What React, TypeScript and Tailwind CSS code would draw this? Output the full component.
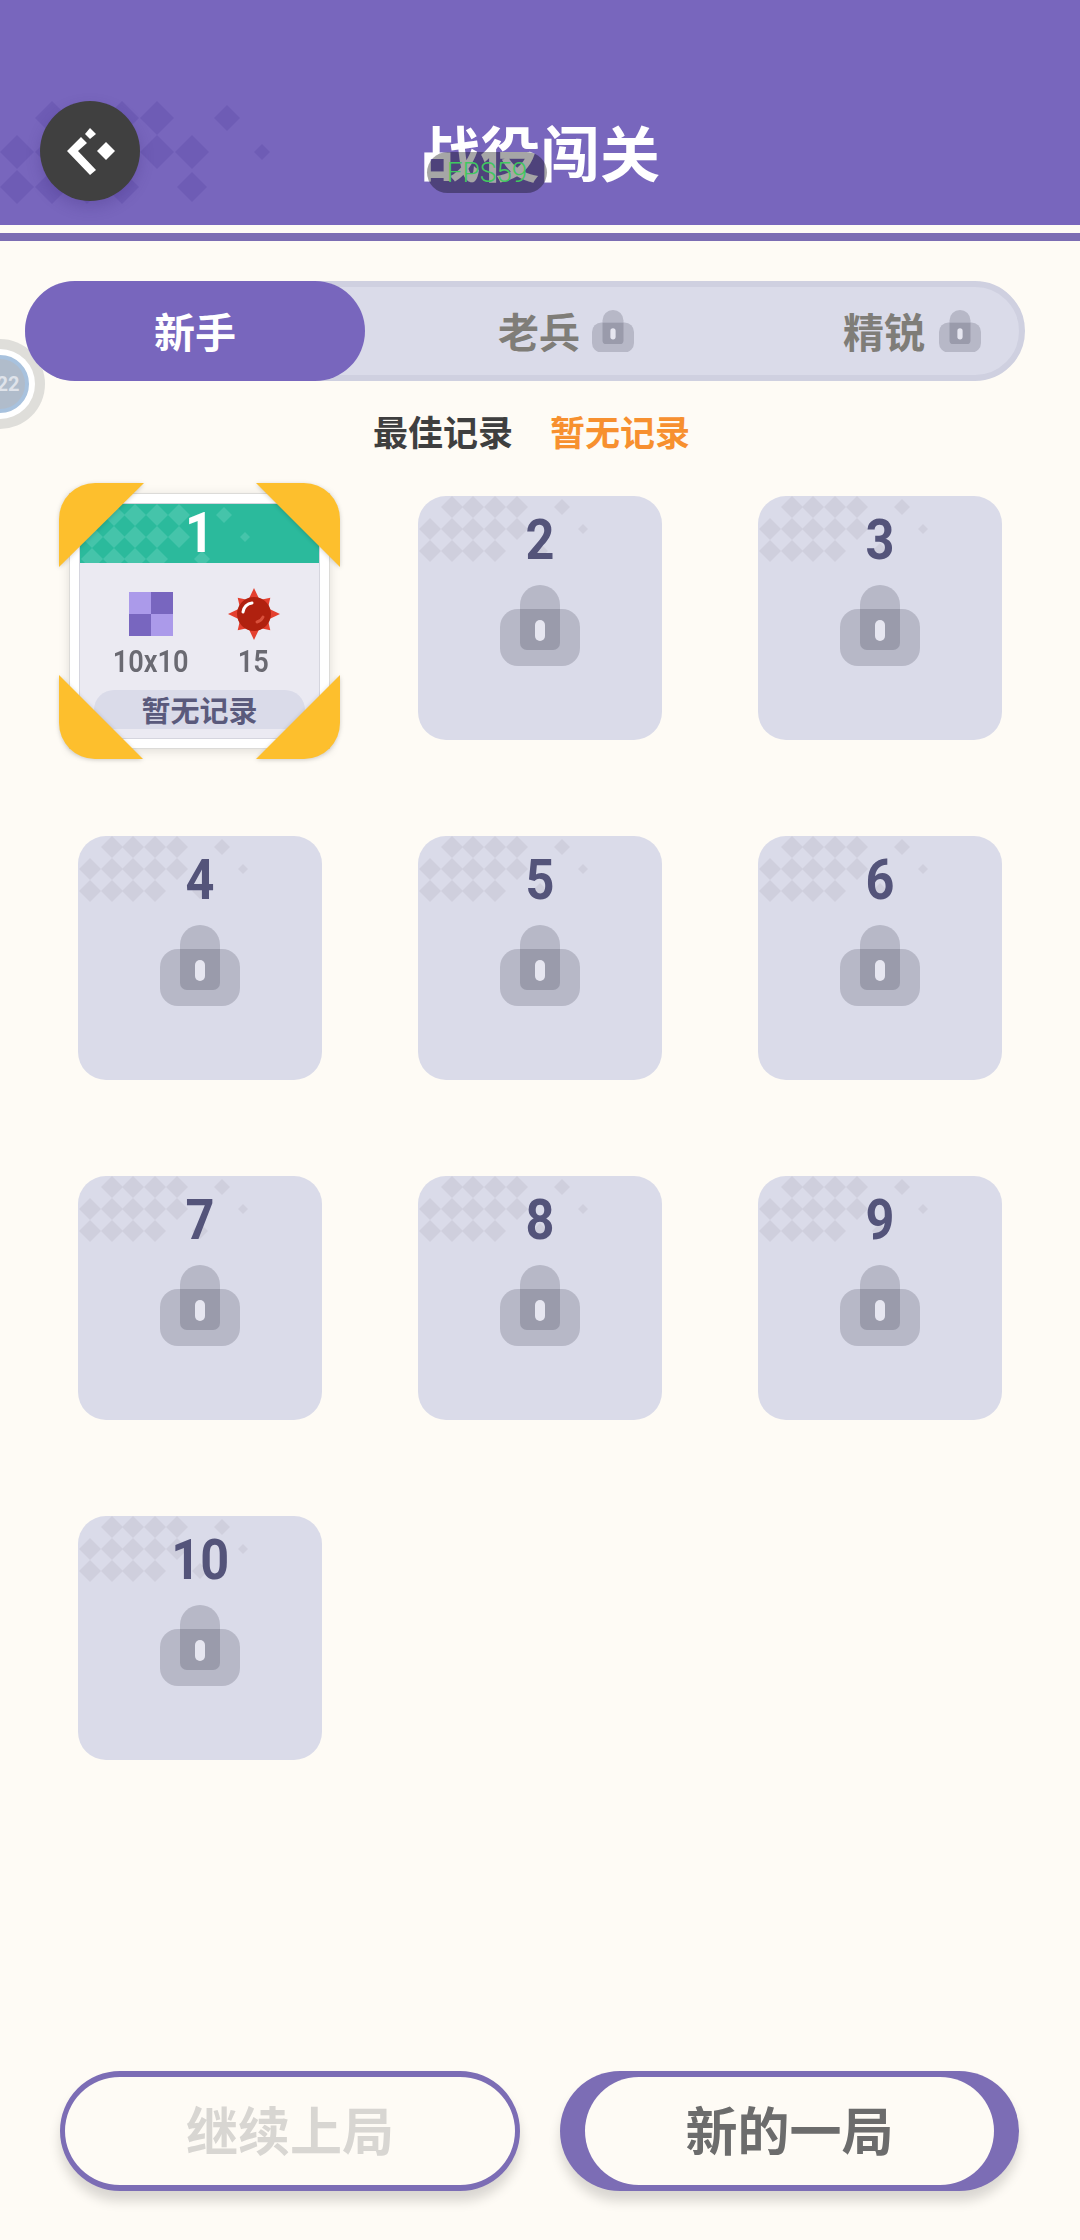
const CJK = 'font-["Noto_Sans_CJK_SC","Noto_Sans",sans-serif]';

// [x, y, half diagonal]
const headerDiamonds: number[][] = [
  [52, 118, 17], [122, 118, 17], [157, 118, 17], [227, 118, 13],
  [17, 152, 17], [52, 152, 17], [122, 152, 17], [157, 152, 17], [192, 152, 17], [262, 152, 8],
  [17, 187, 17], [52, 187, 17], [87, 187, 17], [122, 187, 17], [192, 187, 15],
];

const cardDiamonds: number[][] = [
  [34, 11, 11], [55, 11, 11], [77, 11, 11], [99, 11, 11], [144, 11, 8],
  [12, 33, 11], [34, 33, 11], [55, 33, 11], [77, 33, 11], [99, 33, 11], [165, 33, 5],
  [12, 55, 11], [34, 55, 11], [55, 55, 11], [77, 55, 11], [122, 55, 8],
];

function Diamonds({ items, fill, width, height }: { items: number[][]; fill: string; width: number; height: number }) {
  return (
    <svg width={width} height={height} className="absolute left-0 top-0" fill={fill}>
      {items.map(([x, y, r]) => (
        <polygon key={`${x}-${y}`} points={`${x},${y - r} ${x + r},${y} ${x},${y + r} ${x - r},${y}`} />
      ))}
    </svg>
  );
}

function LockIcon({ size, className }: { size: number; className?: string }) {
  return (
    <svg width={size} height={(size * 81) / 80} viewBox="0 0 80 81" className={className}>
      <path d="M20 24V20a20 20 0 0 1 40 0v4z" fill="#b7b8c7" />
      <rect x="0" y="24" width="80" height="57" rx="18" fill="#b7b8c7" />
      <path d="M20 24h40v34a7 7 0 0 1-7 7H27a7 7 0 0 1-7-7z" fill="#9a9bab" />
      <rect x="35" y="35" width="10" height="21" rx="5" fill="#e6e6f0" />
    </svg>
  );
}

function MineIcon() {
  const points = Array.from({ length: 16 }, (_, i) => {
    const a = (i * Math.PI) / 8;
    const r = i % 2 === 1 ? 15 : i % 4 === 0 ? 26 : 23;
    return `${(26 + r * Math.sin(a)).toFixed(1)},${(26 - r * Math.cos(a)).toFixed(1)}`;
  }).join(' ');
  return (
    <svg width="52" height="52" viewBox="0 0 52 52" className="shrink-0">
      <polygon points={points} fill="#e4402f" />
      <circle cx="26" cy="26" r="17" fill="#b0210f" />
      <path d="M15 24a10 10 0 0 1 9-9" fill="none" stroke="#fff" strokeWidth="3" strokeLinecap="round" />
      <path d="M29 34a9 9 0 0 0 6-5" fill="none" stroke="#d9503c" strokeWidth="3" strokeLinecap="round" />
    </svg>
  );
}

function GridIcon() {
  return (
    <svg width="44" height="44" viewBox="0 0 44 44">
      <rect width="22" height="22" fill="#ab9aea" />
      <rect x="22" width="22" height="22" fill="#7866bf" />
      <rect y="22" width="22" height="22" fill="#7866bf" />
      <rect x="22" y="22" width="22" height="22" fill="#ab9aea" />
    </svg>
  );
}

function SelectedCard() {
  return (
    <div className="relative -ml-[9px] -mt-[3px] h-[256px] w-[261px] border border-[#dcdbd8] bg-white p-[9px] shadow-[0_2px_10px_rgba(0,0,0,0.12)]">
      <div className="flex h-full flex-col border border-[#d5d5de] bg-[#ebeaf2]">
        <div className="relative h-[59px] shrink-0 overflow-hidden bg-[#2bba9c]">
          <Diamonds items={cardDiamonds} fill="#45c4aa" width={240} height={59} />
          <div className="relative scale-x-[0.9] text-center font-['Roboto',sans-serif] text-[56px] leading-[59px] font-bold text-white">
            1
          </div>
        </div>
        <div className="flex pl-[19px] pt-[29px]">
          <div className="flex w-[103px] flex-col items-center">
            <div className="flex h-[44px] items-center justify-center"><GridIcon /></div>
            <div className="mt-[8px] scale-x-[0.85] font-['Roboto',sans-serif] text-[32px] leading-[34px] font-semibold text-[#6a6a72]">10x10</div>
          </div>
          <div className="flex w-[103px] flex-col items-center">
            <div className="flex h-[44px] items-center justify-center"><MineIcon /></div>
            <div className="mt-[8px] scale-x-[0.85] font-['Roboto',sans-serif] text-[32px] leading-[34px] font-semibold text-[#6a6a72]">15</div>
          </div>
        </div>
        <div className={`mx-[14px] mb-[9px] mt-auto flex h-[39px] items-center justify-center rounded-t-[20px] rounded-b-[6px] bg-[#dadbe9] text-[29px] leading-none font-bold text-[#5a5a7c] ${CJK}`}>
          暂无记录
        </div>
      </div>
      <svg width="281" height="276" viewBox="0 0 281 276" className="absolute -left-[11px] -top-[11px] drop-shadow-[0_1px_2px_rgba(0,0,0,0.18)]" fill="#fdbf2d">
        <path d="M0 84V36A36 36 0 0 1 36 0H85Z" />
        <path d="M197 0H245A36 36 0 0 1 281 36V84Z" />
        <path d="M0 192L84 276H36A36 36 0 0 1 0 240Z" />
        <path d="M281 192L197 276H245A36 36 0 0 0 281 240Z" />
      </svg>
    </div>
  );
}

function LockedCard({ n }: { n: number }) {
  return (
    <div className="relative flex h-[244px] w-[244px] flex-col items-center overflow-hidden rounded-[28px] bg-[#dadbe9] pt-[16px]">
      <Diamonds items={cardDiamonds} fill="#cfcfdd" width={244} height={80} />
      <div className="relative scale-x-[0.9] font-['Roboto',sans-serif] text-[56px] leading-[56px] font-bold text-[#54547a]">
        {n}
      </div>
      <LockIcon size={80} className="relative mt-[17px]" />
    </div>
  );
}

export default function App() {
  return (
    <div className={`relative h-[2240px] w-[1080px] overflow-hidden bg-[#fefbf5] ${CJK}`}>
      {/* Header */}
      <div className="relative h-[225px] bg-[#7866bd]">
        <Diamonds items={headerDiamonds} fill="#6e5cb5" width={290} height={225} />
        <button className="absolute left-[40px] top-[101px] flex h-[100px] w-[100px] items-center justify-center rounded-full bg-[#404040] shadow-[0_6px_14px_rgba(60,40,120,0.25)]">
          <svg width="100" height="100" viewBox="0 0 100 100" fill="#fff">
            <polygon points="27,50 41,36 47,42 38,50 56,69 50,74" />
            <polygon points="50,27 56,33 50,38 45,33" />
            <polygon points="66,41 75,50 66,59 57,50" />
          </svg>
        </button>
        <h1 className="pt-[113px] text-center text-[60px] leading-[76px] font-bold text-white">战役闯关</h1>
        <div className="absolute left-[427px] top-[152px] flex h-[41px] w-[120px] items-center justify-center rounded-full bg-black/35 font-['Roboto',sans-serif] text-[28px] font-light text-[#40c860]">
          FPS59
        </div>
      </div>
      <div className="h-[8px] bg-[#fefbf5]" />
      <div className="h-[8px] bg-[#7c6db3]" />

      {/* Floating timer */}
      <div className="absolute -left-[45px] top-[339px] flex h-[90px] w-[90px] items-center justify-center rounded-full bg-[#dfdeda]">
        <div className="flex h-[70px] w-[70px] items-center justify-center rounded-full bg-white">
          <div className="flex h-[58px] w-[58px] items-center justify-center rounded-full border-[4px] border-[#a8c2de] bg-[#b0bccb] pl-[16px] font-['Roboto',sans-serif] text-[20px] leading-none font-bold text-[#dfe3ea]">
            22
          </div>
        </div>
      </div>

      {/* Difficulty tabs */}
      <div className="relative ml-[25px] mt-[40px] flex h-[100px] w-[1000px] items-center rounded-full border-[6px] border-[#cfd0e0] bg-[#dadbe9]">
        <div className="-ml-[6px] flex h-[100px] w-[340px] items-center justify-center rounded-full bg-[#7866bd] text-[41px] font-bold text-white">
          新手
        </div>
        <div className="ml-[133px] flex items-center text-[41px] font-bold text-[#7f7d78]">
          <span>老兵</span>
          <LockIcon size={42} className="ml-[12px]" />
        </div>
        <div className="ml-[209px] flex items-center text-[41px] font-bold text-[#7f7d78]">
          <span>精锐</span>
          <LockIcon size={42} className="ml-[14px]" />
        </div>
      </div>

      {/* Best record */}
      <div className="mt-[25px] flex h-[50px] items-center pl-[373px] text-[35px] font-bold">
        <span className="text-[#3f3f3f]">最佳记录</span>
        <span className="ml-[37px] text-[#f7902f]">暂无记录</span>
      </div>

      {/* Levels */}
      <div className="ml-[78px] mt-[40px] grid w-[924px] grid-cols-[244px_244px_244px] grid-rows-[244px_244px_244px_244px] gap-x-[96px] gap-y-[96px]">
        <SelectedCard />
        {[2, 3, 4, 5, 6, 7, 8, 9, 10].map((n) => (
          <LockedCard key={n} n={n} />
        ))}
      </div>

      {/* Actions */}
      <div className="absolute bottom-[49px] left-[60px] flex h-[120px] gap-[40px]">
        <button className="flex h-[120px] w-[460px] items-center justify-center rounded-full border-x-[5px] border-y-[6px] border-[#7c6db5] bg-[#fefbf5] pb-[4px] text-[52px] font-bold text-[#d8d6d2] shadow-[0_10px_12px_rgba(0,0,0,0.15)]">
          继续上局
        </button>
        <button className="flex h-[120px] w-[459px] items-stretch rounded-full bg-[#7c6db5] px-[25px] py-[6px] shadow-[0_10px_12px_rgba(0,0,0,0.15)]">
          <span className="flex flex-1 items-center justify-center rounded-full bg-[#fefbf5] pb-[4px] text-[52px] font-bold text-[#6c6c6c]">
            新的一局
          </span>
        </button>
      </div>
    </div>
  );
}
